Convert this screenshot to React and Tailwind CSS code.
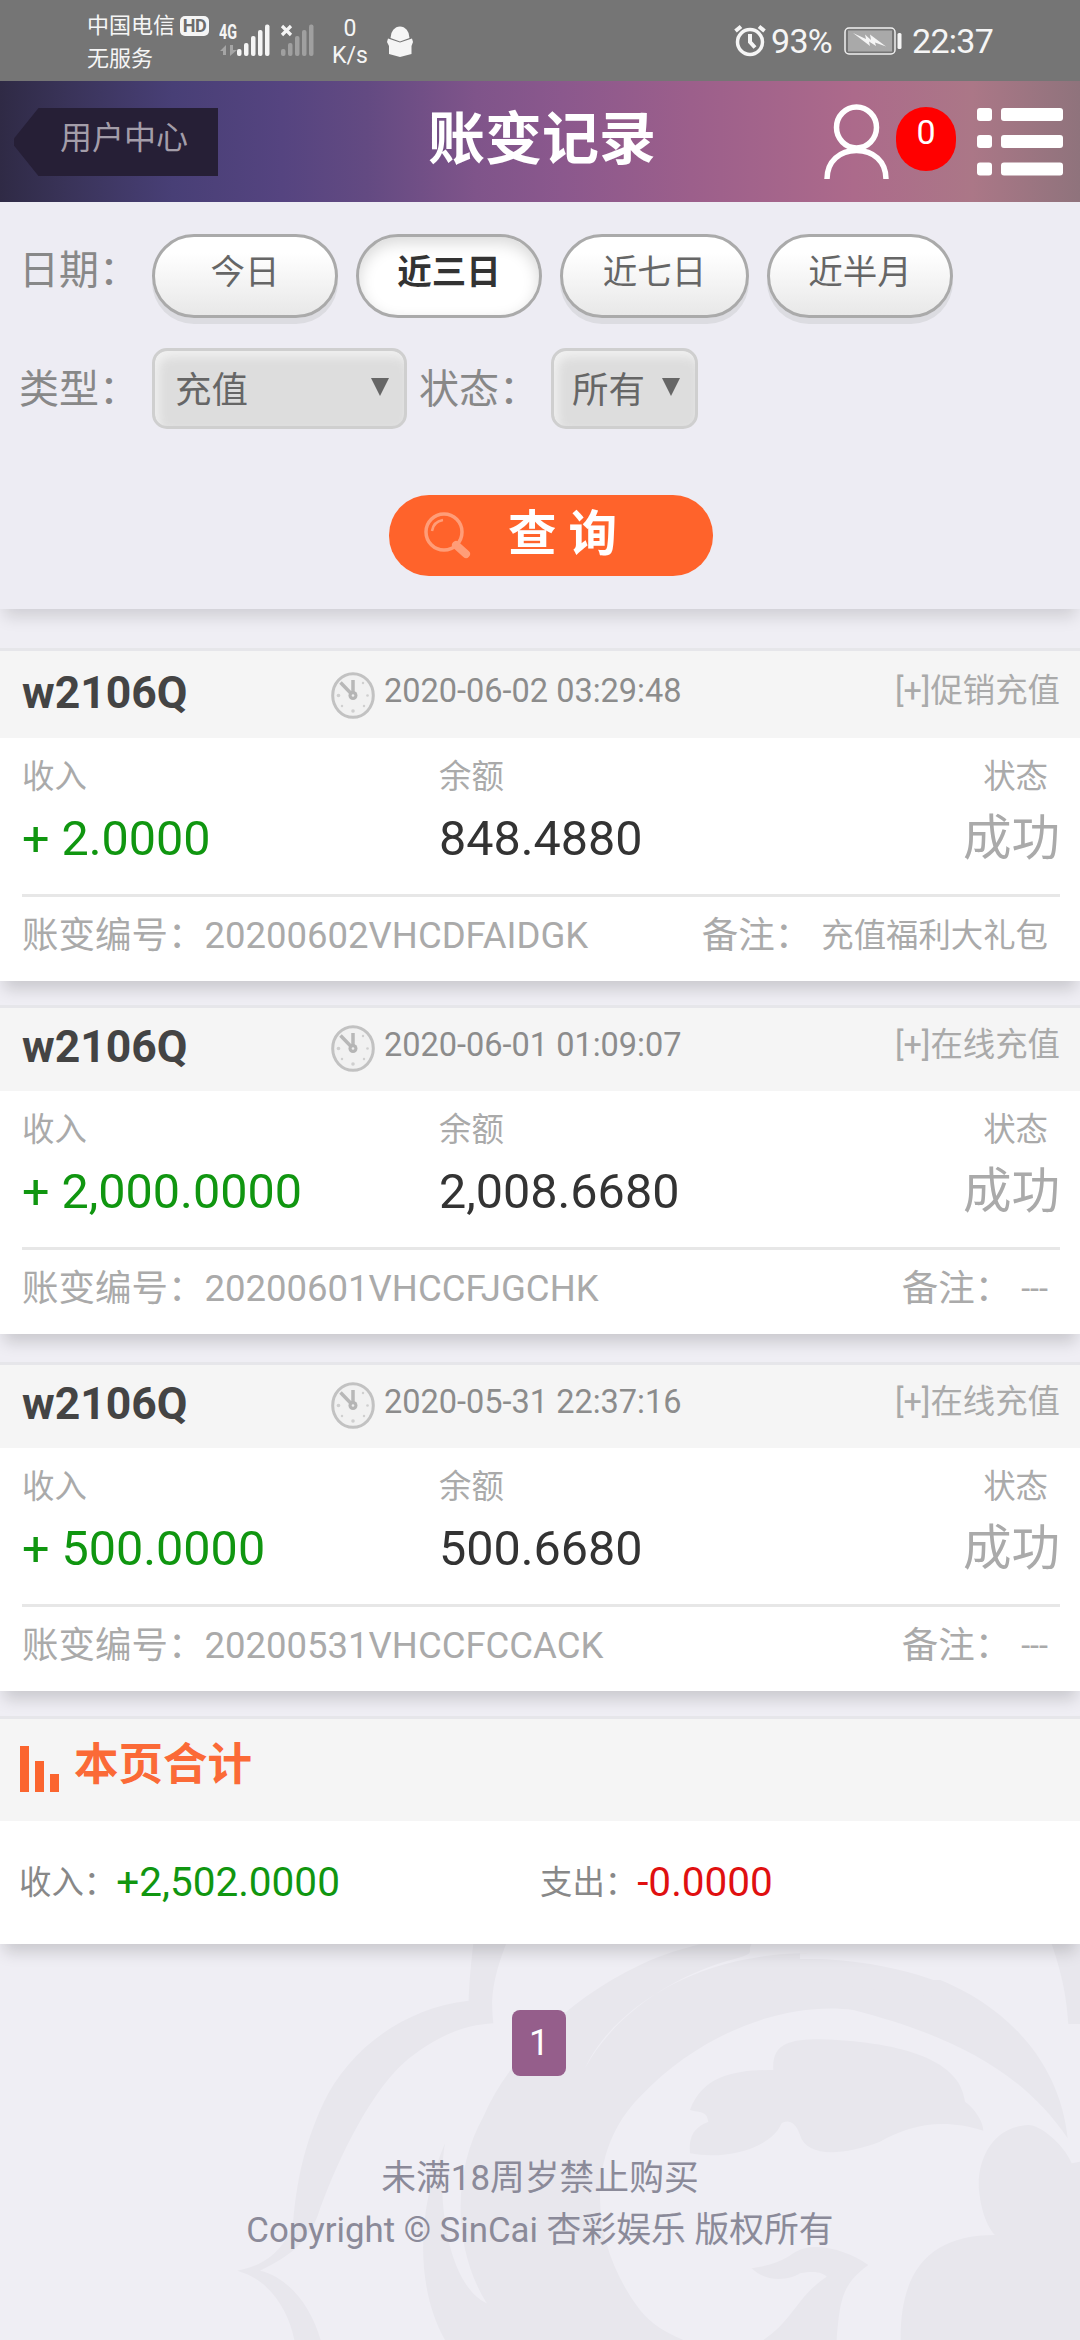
import { useState } from "react";

const registros = [
  {
    usuario: "w2106Q",
    data: "2020-06-02 03:29:48",
    tipo: "[+]促销充值",
    valor: "+ 2.0000",
    saldo: "848.4880",
    status: "成功",
    numero: "20200602VHCDFAIDGK",
    nota: "充值福利大礼包",
    margem: "mt-[39px]",
    topo: "h-[90px] pt-[3px]",
  },
  {
    usuario: "w2106Q",
    data: "2020-06-01 01:09:07",
    tipo: "[+]在线充值",
    valor: "+ 2,000.0000",
    saldo: "2,008.6680",
    status: "成功",
    numero: "20200601VHCCFJGCHK",
    nota: "---",
    margem: "mt-[24px]",
    topo: "h-[86px]",
  },
  {
    usuario: "w2106Q",
    data: "2020-05-31 22:37:16",
    tipo: "[+]在线充值",
    valor: "+ 500.0000",
    saldo: "500.6680",
    status: "成功",
    numero: "20200531VHCCFCCACK",
    nota: "---",
    margem: "mt-[28px]",
    topo: "h-[86px]",
  },
];

const periodos = [
  { nome: "今日", largura: "w-[186px]" },
  { nome: "近三日", largura: "ml-[18px] w-[186px]" },
  { nome: "近七日", largura: "ml-[18px] w-[189px]" },
  { nome: "近半月", largura: "ml-[18px] w-[186px]" },
];

const StatusBar = () => (
  <div className="flex h-[81px] bg-[#757575] text-[#f5f5f5]">
    <div className="ml-[87px] flex w-[122px] flex-col pt-[9px] text-[22px] leading-[33px]">
      <div className="flex items-center whitespace-nowrap">
        中国电信
        <span className="ml-[5px] flex h-[20px] w-[29px] shrink-0 items-center justify-center rounded-[5px] bg-[#f5f5f5] text-[18px] leading-none font-bold tracking-[-0.5px] text-[#6b6b6b]">
          HD
        </span>
      </div>
      <div>无服务</div>
    </div>
    <svg className="ml-[10px] h-[81px] w-[100px]" viewBox="219 0 100 81" fill="#f5f5f5">
      <text x="219" y="38.5" fontSize="20" fontWeight="700" textLength="18" lengthAdjust="spacingAndGlyphs">4G</text>
      <path d="M220 51 l6-6 v10 h-3 v-4z M230 45 h3 v5 h4 l-7 6z" fill="#a5a5a5" />
      <rect x="237" y="49" width="4.5" height="7" rx="2" />
      <rect x="244" y="43" width="4.5" height="13" rx="2" />
      <rect x="251" y="36" width="4.5" height="20" rx="2" />
      <rect x="258" y="30" width="4.5" height="26" rx="2" />
      <rect x="265" y="24.5" width="4.5" height="31.5" rx="2" />
      <g fill="#a0a0a0">
        <rect x="281" y="49" width="4.5" height="7" rx="2" />
        <rect x="288" y="43" width="4.5" height="13" rx="2" />
        <rect x="295" y="36" width="4.5" height="20" rx="2" />
        <rect x="302" y="30" width="4.5" height="26" rx="2" />
        <rect x="309" y="24.5" width="4.5" height="31.5" rx="2" />
      </g>
      <path d="M282 26 l9 9 M291 26 l-9 9" stroke="#f5f5f5" strokeWidth="3.2" />
    </svg>
    <div className="ml-[10px] flex w-[42px] flex-col items-center pt-[15px] text-[23px] leading-[27px]">
      <span>0</span>
      <span>K/s</span>
    </div>
    <svg className="ml-[11px] h-[81px] w-[36px]" viewBox="382 0 36 81" fill="#f5f5f5">
      <path d="M390.5 38 a9.5 11.500 0 0 1 19 0 L400 41.5z" />
      <path d="M388 38.5 L400 42.5 L412 38.5 L413 42 L411.5 46 V54 L400 57 L389 54 V46 L387 42z" />
    </svg>
    <svg className="ml-[316px] h-[81px] w-[32px]" viewBox="734 0 32 81" fill="none" stroke="#f5f5f5">
      <circle cx="750" cy="42" r="12.5" strokeWidth="3.5" />
      <path d="M750 34 V42 L755 47.5" strokeWidth="4" />
      <path d="M735.5 31 L741 26.5 M764.5 31 L759 26.5" strokeWidth="4" />
    </svg>
    <span className="ml-[5px] w-[62px] text-[34px] leading-[82px] tracking-[-0.7px]">93%</span>
    <svg className="ml-[9px] h-[81px] w-[60px]" viewBox="841 0 60 81">
      <rect x="844" y="28" width="50" height="26" rx="4" fill="none" stroke="#f0f0f0" strokeWidth="1.5" />
      <rect x="847" y="30.5" width="44" height="21" fill="#a9a9a9" />
      <path d="M852 33 L865 39 L864 34.5 L870 40 L869 34.5 L885 46.5 L874 42.5 L875 46 L868 41.5 L869 46z" fill="#f5f5f5" />
      <rect x="896.5" y="33" width="4" height="16" rx="1.5" fill="#f5f5f5" />
    </svg>
    <span className="ml-[10px] text-[34px] leading-[82px] tracking-[-0.7px]">22:37</span>
  </div>
);

const Header = () => (
  <header className="flex h-[121px] bg-[linear-gradient(90deg,#2f2a45_0%,#393358_6%,#483f76_16%,#554480_26%,#634a82_34%,#7f548a_44%,#8b588d_52%,#9c5f8b_64%,#ac6a8b_79%,#ab7787_90%,#8f737c_100%)]">
    <a
      href="#"
      className="mt-[27px] ml-[14px] h-[68px] w-[204px] bg-[#261f36] pl-[46px] text-[32px] leading-[61px] text-[#a39da9] [clip-path:polygon(12%_0,100%_0,100%_100%,12%_100%,0_55%,0_45%)]"
    >
      用户中心
    </a>
    <h1 className="ml-[210px] w-[232px] text-[57px] leading-[117px] font-bold whitespace-nowrap text-white">账变记录</h1>
    <svg className="mt-[23px] ml-[164px] h-[76px] w-[66px]" viewBox="0 0 66 76" fill="none" stroke="#fff" strokeWidth="5.5">
      <ellipse cx="32.5" cy="23.5" rx="20" ry="20.5" />
      <path d="M3 75 C3 57 16 46.5 32.5 46.5 C49 46.5 62 57 62 75" />
    </svg>
    <span className="mt-[26px] ml-[6px] h-[64px] w-[60px] rounded-full bg-[#ff0000] text-center text-[34px] leading-[51px] text-white">
      0
    </span>
    <svg className="mt-[27px] ml-[21px] h-[68px] w-[86px]" viewBox="0 0 86 68" fill="#fff">
      <rect y="0" width="15" height="13" rx="3" />
      <rect x="24" y="0" width="62" height="13" rx="3" />
      <rect y="27" width="15" height="13" rx="3" />
      <rect x="24" y="27" width="62" height="13" rx="3" />
      <rect y="54.5" width="15" height="13" rx="3" />
      <rect x="24" y="54.5" width="62" height="13" rx="3" />
    </svg>
  </header>
);

const Seta = () => (
  <svg className="mb-[4px] h-[18px] w-[18px]" viewBox="0 0 18 18">
    <path d="M0 0 H18 L9 18z" fill="#666" />
  </svg>
);

const Relogio = () => (
  <svg className="h-[47px] w-[44px] shrink-0" viewBox="0 0 44 47" fill="none">
    <ellipse cx="22" cy="23.5" rx="20.3" ry="21.8" fill="#f1f1f1" stroke="#c2c2c2" strokeWidth="3" />
    <g fill="#cfcfcf">
      <circle cx="22" cy="39" r="1.8" />
      <circle cx="7.5" cy="23.5" r="1.8" />
      <circle cx="36.5" cy="23.5" r="1.3" />
      <circle cx="32" cy="11" r="1.2" />
      <circle cx="33" cy="34" r="1.2" />
      <circle cx="11" cy="34" r="1.2" />
    </g>
    <path d="M22 23.5 V8 M22 23.5 L9.5 10.5" stroke="#b8b8b8" strokeWidth="3.5" />
    <circle cx="22" cy="23.5" r="4.5" fill="#b5b5b5" />
    <circle cx="22" cy="23.5" r="1.3" fill="#eee" />
  </svg>
);

const Registro = ({ item }) => (
  <section className={`shadow-[0_12px_15px_-4px_rgba(0,0,0,0.16)] ${item.margem}`}>
    <div className={`flex items-center border-t-[3px] border-[#e6e6ea] bg-[#f5f5f5] ${item.topo}`}>
      <span className="mb-[6px] w-[309px] pl-[22px] text-[44.5px] leading-[56px] font-bold text-[#444]">{item.usuario}</span>
      <div className="flex w-[450px] items-center">
        <span className="mb-[2px] ml-[22px] flex">
          <Relogio />
        </span>
        <span className="mb-[10px] ml-[9px] text-[32.5px] leading-[44px] text-[#8c8c8c]">{item.data}</span>
      </div>
      <span className="mb-[10px] flex-1 pr-[20px] text-right text-[32.4px] leading-[44px] text-[#aaa]">{item.tipo}</span>
    </div>
    <div className="h-[243px] bg-white pt-[19px] pr-[20px] pl-[22px] text-[#aaa]">
      <div className="flex text-[32.4px] leading-[40px]">
        <span className="w-[417px]">收入</span>
        <span className="flex-1">余额</span>
        <span className="pr-[12px]">状态</span>
      </div>
      <div className="mt-[10px] flex h-[87px] text-[48.5px] leading-[64px]">
        <span className="w-[417px] text-[#109610]">{item.valor}</span>
        <span className="flex-1 text-[#333]">{item.saldo}</span>
        <span>{item.status}</span>
      </div>
      <div className="flex justify-between border-t-[3px] border-[#e7e7e7] text-[36.5px] leading-[78px]">
        <div className="flex">
          账变编号：<span>{item.numero}</span>
        </div>
        <div className="flex pr-[12px]">
          备注：<span className="ml-[10px] text-[32.4px]">{item.nota}</span>
        </div>
      </div>
    </div>
  </section>
);

// flor em marca d'água no fundo do rodapé
const MarcaDagua = () => (
  <svg className="absolute right-0 bottom-0 -z-10 h-[410px] w-[880px]" viewBox="0 0 2640 1230" fill="#e8e7ed">
    <path d="M825 0 C812 100 808 160 806 212 C600 235 440 370 370 520 C310 650 290 760 280 870 C265 940 210 1005 112 1022 C210 1050 265 1140 283 1230 H362 C330 1120 260 1040 180 1022 C240 990 310 960 352 860 C400 720 500 500 610 400 C690 330 780 285 880 280 C870 200 880 130 935 0z" />
    <path d="M735 1230 C650 1080 645 850 735 640 C710 780 735 1060 860 1120 C755 950 760 720 850 560 C920 400 1080 220 1320 105 C1400 65 1500 40 1600 20 L1900 88 C2260 90 2570 300 2603 625 C2470 430 2270 320 1960 240 C1780 215 1520 290 1320 500 C1160 660 1160 930 1320 1140 C1350 1180 1400 1210 1450 1230z" />
    <path d="M1155 415 C1220 270 1440 80 1800 70 C2000 60 2100 50 2150 0 H1700 C1600 70 1700 60 1600 88 C1440 130 1250 240 1155 415z" fill="#efeef4" />
    <path d="M1800 70 C2000 70 2140 0 2150 0 H2600 V150 H2140 C2020 100 1920 85 1800 88z" fill="#efeef4" />
    <path d="M1700 91 C1980 70 2200 130 2350 220 C2150 200 1900 150 1700 150z" />
    <g transform="translate(1320 0)">
      <path d="M400 420 C395 340 450 328 540 328 C760 335 960 380 975 515 C1010 540 1030 580 1030 602 C900 560 800 590 720 635 C600 680 500 680 480 615 C465 570 440 570 425 580 C390 660 250 690 150 670 C145 610 170 590 205 575 C200 540 180 550 150 540 C190 430 300 420 400 420z" />
      <path d="M1220 0 H1320 V282 H1285 C1280 200 1265 120 1220 0z" />
      <path d="M1320 695 L1295 700 C1270 640 1200 585 1165 585 C1050 590 1010 700 1017 780 C1025 860 1050 900 1065 915 C870 915 780 1020 782 1230 H1320z" />
      <path d="M590 1230 C600 1100 610 1060 685 1005 C620 960 520 930 460 970 C420 1000 370 1010 335 1015 C380 1060 450 1050 480 1030 C530 1020 550 1030 560 1040 C470 1100 460 1170 370 1230z" />
    </g>
  </svg>
);

const App = () => {
  const [periodo, setPeriodo] = useState("近三日");

  return (
    <div className="relative isolate h-[2340px] w-[1080px] overflow-hidden bg-[#efeef4] font-[Roboto,'Noto_Sans_CJK_SC',sans-serif]">
      <MarcaDagua />
      <StatusBar />
      <Header />

      <div className="h-[407px] bg-[#edecf3] pt-[32px] shadow-[0_12px_15px_-4px_rgba(0,0,0,0.13)]">
        <div className="flex h-[84px] items-center pl-[19px]">
          <span className="mb-[10px] w-[133px] text-[40px] leading-[60px] text-[#888]">日期：</span>
          {periodos.map((p) => (
            <button
              key={p.nome}
              type="button"
              onClick={() => setPeriodo(p.nome)}
              className={`h-[84px] rounded-[42px] border-[3px] border-[#aaa] pb-[7px] text-[34.5px] leading-none ${p.largura} ${
                periodo === p.nome
                  ? "bg-white font-bold text-[#333] shadow-[inset_0_6px_15px_rgba(0,0,0,0.15)]"
                  : "bg-linear-to-b from-white from-20% to-[#e8e8e8] text-[#666] shadow-[0_6px_0_#dcdce1]"
              }`}
            >
              {p.nome}
            </button>
          ))}
        </div>

        <div className="mt-[30px] flex h-[81px] items-center pl-[19px]">
          <span className="mt-[3px] w-[133px] text-[40px] leading-[60px] text-[#888]">类型：</span>
          <button
            type="button"
            className="flex h-[81px] w-[255px] items-center justify-between rounded-[15px] border-[3px] border-[#cfcfcf] bg-[#ddd] pr-[15px] pl-[20px] text-[36.5px] text-[#666] shadow-[inset_4px_6px_10px_#f0f0f0]"
          >
            <span className="pt-[6px]">充值</span>
            <Seta />
          </button>
          <span className="mt-[3px] ml-[12px] w-[132px] text-[40px] leading-[60px] text-[#888]">状态：</span>
          <button
            type="button"
            className="flex h-[81px] w-[147px] items-center justify-between rounded-[15px] border-[3px] border-[#cfcfcf] bg-[#ddd] pr-[15px] pl-[18px] text-[36.5px] text-[#666] shadow-[inset_4px_6px_10px_#f0f0f0]"
          >
            <span className="pt-[6px]">所有</span>
            <Seta />
          </button>
        </div>

        <button
          type="button"
          className="mt-[66px] ml-[389px] flex h-[81px] w-[324px] items-center rounded-[40px] bg-[#ff632b] pl-[34px] text-white"
        >
          <svg className="h-[50px] w-[50px]" viewBox="0 0 50 50" fill="none" stroke="#ff9d78">
            <circle cx="21" cy="21" r="18" strokeWidth="3.5" />
            <path d="M9 20 C10 13 14 10 20 9" strokeWidth="2.5" />
            <path d="M33 34 L43 43" strokeWidth="8" strokeLinecap="round" />
          </svg>
          <span className="mb-[2px] ml-[35px] text-[48.5px] leading-[60px] font-bold whitespace-pre">查 询</span>
        </button>
      </div>

      {registros.map((item) => (
        <Registro key={item.numero} item={item} />
      ))}

      <section className="mt-[25px] shadow-[0_12px_15px_-4px_rgba(0,0,0,0.16)]">
        <div className="flex h-[105px] border-t-[3px] border-[#e6e6ea] bg-[#f5f5f5] pl-[20px]">
          <svg className="mt-[27px] h-[46px] w-[40px]" viewBox="0 0 40 46" fill="#fb652f">
            <rect width="9" height="46" />
            <rect x="15" y="15" width="9" height="31" />
            <rect x="30" y="28" width="9" height="18" />
          </svg>
          <h2 className="ml-[14px] text-[44.5px] leading-[93px] font-bold text-[#fb6a37]">本页合计</h2>
        </div>
        <div className="flex h-[123px] bg-white pl-[19px] text-[32.4px] leading-[124px] text-[#888]">
          <div className="flex w-[521px]">
            收入：<span className="text-[40.5px] leading-[122px] text-[#109610]">+2,502.0000</span>
          </div>
          <div className="flex">
            支出：<span className="text-[40.5px] leading-[122px] text-[#e01010]">-0.0000</span>
          </div>
        </div>
      </section>

      <div className="mt-[66px] flex justify-center pr-[2px]">
        <span className="h-[66px] w-[54px] rounded-[8px] bg-[#955e8b] text-center text-[36px] leading-[67px] text-white">1</span>
      </div>

      <footer className="mt-[76px] text-center text-[34.8px] leading-[52px] text-[#8b8a99]">
        <p>未满18周岁禁止购买</p>
        <p>Copyright © SinCai 杏彩娱乐 版权所有</p>
      </footer>
    </div>
  );
};

export default App;
